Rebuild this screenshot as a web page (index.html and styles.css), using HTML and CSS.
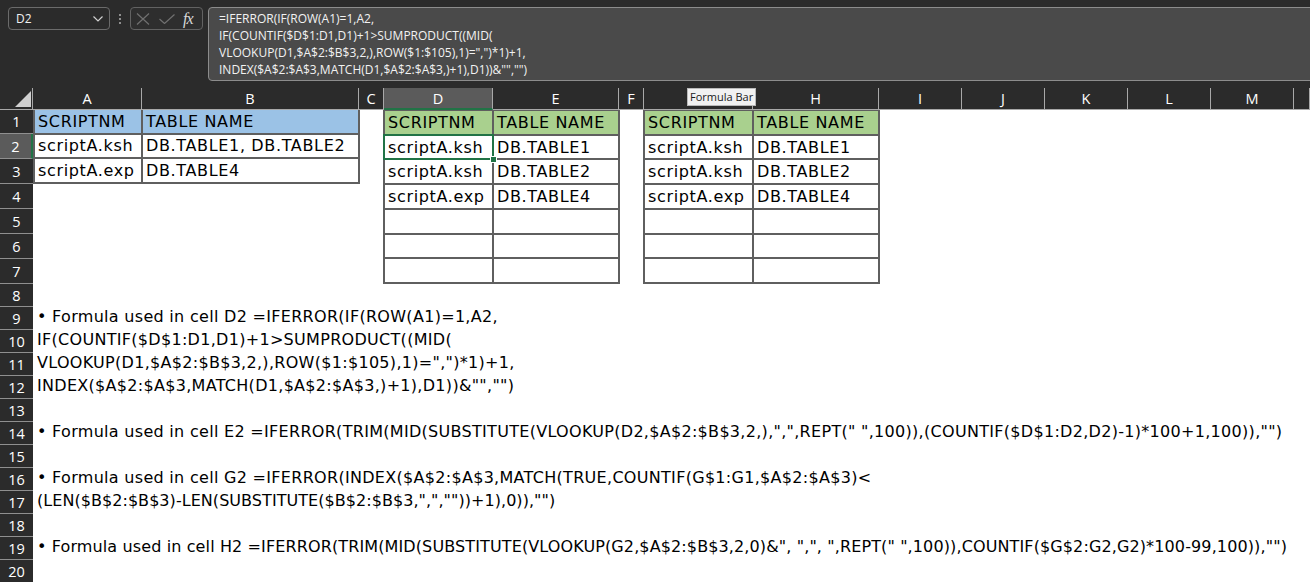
FILE: index.html
```html
<!DOCTYPE html>
<html>
<head>
<meta charset="utf-8">
<link rel="stylesheet" href="styles.css">
</head>
<body>
<div class="app">
  <div class="fbar">
    <div class="namebox"><span>D2</span><svg class="chev" width="10" height="6" viewBox="0 0 10 6"><path d="M0.5 0.5 L5 5 L9.5 0.5" fill="none" stroke="#d0d0d0" stroke-width="1.2"/></svg></div>
    <div class="dots"><span></span><span></span><span></span></div>
    <div class="fxbox">
      <svg width="14" height="12" viewBox="0 0 14 12"><path d="M1 0.5 L13 11.5 M13 0.5 L1 11.5" fill="none" stroke="#707070" stroke-width="1.2"/></svg>
      <svg width="16" height="10" viewBox="0 0 16 10"><path d="M0.5 5 L5.5 9.5 L15.5 0.5" fill="none" stroke="#707070" stroke-width="1.2"/></svg>
      <span class="fx">fx</span>
    </div>
    <div class="formula"><div>=IFERROR(IF(ROW(A1)=1,A2,</div><div>IF(COUNTIF($D$1:D1,D1)+1&gt;SUMPRODUCT((MID(</div><div>VLOOKUP(D1,$A$2:$B$3,2,),ROW($1:$105),1)=",")*1)+1,</div><div>INDEX($A$2:$A$3,MATCH(D1,$A$2:$A$3,)+1),D1))&amp;"","")</div></div>
  </div>
  <div class="sheet">
    <div class="corner"><svg width="16" height="16" viewBox="0 0 16 16"><path d="M16 0 L16 16 L0 16 Z" fill="#d0d0d0"/></svg></div>
    <div class="ch">A</div><div class="ch">B</div><div class="ch">C</div><div class="ch sel">D</div><div class="ch">E</div><div class="ch">F</div><div class="ch"></div><div class="ch">H</div><div class="ch">I</div><div class="ch">J</div><div class="ch">K</div><div class="ch">L</div><div class="ch">M</div><div class="ch"></div>

    <div class="tbl tbl-ab">
      <div class="c hb">SCRIPTNM</div><div class="c hb">TABLE NAME</div>
      <div class="c">scriptA.ksh</div><div class="c">DB.TABLE1, DB.TABLE2</div>
      <div class="c">scriptA.exp</div><div class="c">DB.TABLE4</div>
    </div>
    <div class="tbl tbl-de">
      <div class="c hg">SCRIPTNM</div><div class="c hg">TABLE NAME</div>
      <div class="c sel">scriptA.ksh</div><div class="c">DB.TABLE1</div>
      <div class="c">scriptA.ksh</div><div class="c">DB.TABLE2</div>
      <div class="c">scriptA.exp</div><div class="c">DB.TABLE4</div>
      <div class="c"></div><div class="c"></div>
      <div class="c"></div><div class="c"></div>
      <div class="c"></div><div class="c"></div>
    </div>
    <div class="tbl tbl-gh">
      <div class="c hg">SCRIPTNM</div><div class="c hg">TABLE NAME</div>
      <div class="c">scriptA.ksh</div><div class="c">DB.TABLE1</div>
      <div class="c">scriptA.ksh</div><div class="c">DB.TABLE2</div>
      <div class="c">scriptA.exp</div><div class="c">DB.TABLE4</div>
      <div class="c"></div><div class="c"></div>
      <div class="c"></div><div class="c"></div>
      <div class="c"></div><div class="c"></div>
    </div>

    <div class="rh">1</div>
    <div class="rh sel">2</div>
    <div class="rh">3</div>
    <div class="rh">4</div>
    <div class="rh">5</div>
    <div class="rh">6</div>
    <div class="rh">7</div>
    <div class="rh">8</div>
    <div class="rh">9</div><div class="ln">• Formula used in cell D2 =IFERROR(IF(ROW(A1)=1,A2,</div>
    <div class="rh">10</div><div class="ln">IF(COUNTIF($D$1:D1,D1)+1&gt;SUMPRODUCT((MID(</div>
    <div class="rh">11</div><div class="ln">VLOOKUP(D1,$A$2:$B$3,2,),ROW($1:$105),1)=",")*1)+1,</div>
    <div class="rh">12</div><div class="ln">INDEX($A$2:$A$3,MATCH(D1,$A$2:$A$3,)+1),D1))&amp;"","")</div>
    <div class="rh">13</div>
    <div class="rh">14</div><div class="ln">• Formula used in cell E2 =IFERROR(TRIM(MID(SUBSTITUTE(VLOOKUP(D2,$A$2:$B$3,2,),",",REPT(" ",100)),(COUNTIF($D$1:D2,D2)-1)*100+1,100)),"")</div>
    <div class="rh">15</div>
    <div class="rh">16</div><div class="ln">• Formula used in cell G2 =IFERROR(INDEX($A$2:$A$3,MATCH(TRUE,COUNTIF(G$1:G1,$A$2:$A$3)&lt;</div>
    <div class="rh">17</div><div class="ln tight">(LEN($B$2:$B$3)-LEN(SUBSTITUTE($B$2:$B$3,",",""))+1),0)),"")</div>
    <div class="rh">18</div>
    <div class="rh">19</div><div class="ln tighter">• Formula used in cell H2 =IFERROR(TRIM(MID(SUBSTITUTE(VLOOKUP(G2,$A$2:$B$3,2,0)&amp;", ",", ",REPT(" ",100)),COUNTIF($G$2:G2,G2)*100-99,100)),"")</div>
    <div class="rh">20</div>
  </div>
  <div class="tip">Formula Bar</div>
</div>
</body>
</html>
```

FILE: styles.css
```css
html, body {
  margin: 0;
  padding: 0;
  background: #ffffff;
}
body {
  width: 1310px;
  height: 582px;
  overflow: hidden;
}
.app {
  position: relative;
  width: 1310px;
  height: 582px;
  overflow: hidden;
  background: #ffffff;
}

/* formula bar */
.fbar {
  display: flex;
  align-items: flex-start;
  height: 88px;
  box-sizing: border-box;
  padding: 7px 0 0 8px;
  background: #2b2b2b;
  font-family: "Open Sans", sans-serif;
}
.namebox {
  width: 102px;
  height: 23px;
  box-sizing: border-box;
  border: 1px solid #6b6b6b;
  border-radius: 4px;
  display: flex;
  align-items: center;
  justify-content: space-between;
  padding: 0 6px 0 7px;
  color: #f0f0f0;
  font-size: 12px;
}
.dots {
  width: 20px;
  height: 23px;
  display: flex;
  flex-direction: column;
  align-items: center;
  justify-content: center;
  gap: 2px;
}
.dots span {
  width: 2px;
  height: 2px;
  background: #b0b0b0;
  border-radius: 50%;
}
.fxbox {
  width: 73px;
  height: 23px;
  box-sizing: border-box;
  border: 1px solid #626262;
  border-radius: 4px;
  background: #2e2e2e;
  display: flex;
  align-items: center;
  padding: 0 0 0 5px;
  gap: 9px;
}
.fx {
  font-family: "Liberation Serif", serif;
  font-style: italic;
  font-size: 16px;
  color: #d8d8d8;
  letter-spacing: -1px;
  margin-left: -1px;
}
.formula {
  flex: 1;
  margin-left: 5px;
  margin-right: -6px;
  height: 74px;
  box-sizing: border-box;
  border: 1px solid #8c8c8c;
  border-radius: 4px;
  background: #4a4a4a;
  padding: 2px 10px;
  color: #f2f2f2;
  font-size: 12px;
  line-height: 17px;
  white-space: pre;
}

/* sheet grid */
.sheet {
  display: grid;
  grid-template-columns: 33px 109px 217px 25px 109px 126px 25px 109px 126px 83px 83px 83px 83px 83px 1fr;
  grid-template-rows: 22px 24px repeat(6, 25px) repeat(13, 23px);
}
.corner {
  background: #2b2b2b;
  box-sizing: border-box;
  border-right: 1px solid #a8a8a8;
  border-bottom: 1px solid #a8a8a8;
  display: flex;
  justify-content: flex-end;
  align-items: flex-end;
  padding: 0 1px 2px 0;
}
.ch {
  background: #2b2b2b;
  box-sizing: border-box;
  border-right: 1px solid #a8a8a8;
  border-bottom: 1px solid #a8a8a8;
  color: #ffffff;
  font-family: "Open Sans", sans-serif;
  font-size: 14.5px;
  display: flex;
  align-items: center;
  justify-content: center;
}
.ch.sel {
  background: #5b5b5b;
  border-bottom: 2px solid #217346;
}
.rh {
  grid-column: 1;
  background: #2b2b2b;
  box-sizing: border-box;
  border-bottom: 1px solid #8f8f8f;
  color: #ffffff;
  font-family: "Open Sans", sans-serif;
  font-size: 14.5px;
  display: flex;
  align-items: center;
  justify-content: center;
}
.rh.sel {
  background: #5b5b5b;
  border-right: 2px solid #217346;
}
.ln {
  grid-column: 2 / -1;
  white-space: pre;
  font-family: "DejaVu Sans", sans-serif;
  font-size: 16px;
  letter-spacing: 0.3px;
  color: #000000;
  display: flex;
  align-items: center;
  padding: 0 0 4px 4px;
}
.ln.tight {
  letter-spacing: 0.05px;
}
.ln.tighter {
  letter-spacing: 0.12px;
}

/* tables */
.tbl {
  display: grid;
  grid-template-columns: 107px 1fr;
  grid-auto-rows: 1fr;
  gap: 2px;
  padding: 1px 2px 2px;
  margin: 0 -1px;
  background: #5f5f5f;
}
.tbl-ab {
  grid-column: 2 / 4;
  grid-row: 2 / 5;
  grid-template-columns: 106px 1fr;
  margin-left: 0;
  padding-top: 0;
}
.tbl-de {
  grid-column: 5 / 7;
  grid-row: 2 / 9;
}
.tbl-gh {
  grid-column: 8 / 10;
  grid-row: 2 / 9;
}
.c {
  background: #ffffff;
  font-family: "DejaVu Sans", sans-serif;
  font-size: 16px;
  letter-spacing: 0.65px;
  color: #000000;
  display: flex;
  align-items: center;
  padding-left: 3px;
  white-space: nowrap;
  overflow: hidden;
}
.c.hb {
  background: #9bc2e6;
}
.c.hg {
  background: #a9d08e;
}
.c.sel {
  position: relative;
  overflow: visible;
  z-index: 1;
  box-shadow: 0 0 0 2px #217346;
}
.c.sel::after {
  content: "";
  position: absolute;
  right: -5px;
  bottom: -5px;
  width: 5px;
  height: 5px;
  background: #217346;
  border: 1px solid #ffffff;
}

/* tooltip */
.tip {
  position: absolute;
  left: 687px;
  top: 88px;
  height: 18px;
  box-sizing: border-box;
  padding: 0 2px;
  border: 1px solid #b9b9b9;
  background: #f1f1f1;
  font-family: "Open Sans", sans-serif;
  font-size: 11px;
  line-height: 16px;
  color: #1a1a1a;
}
```
